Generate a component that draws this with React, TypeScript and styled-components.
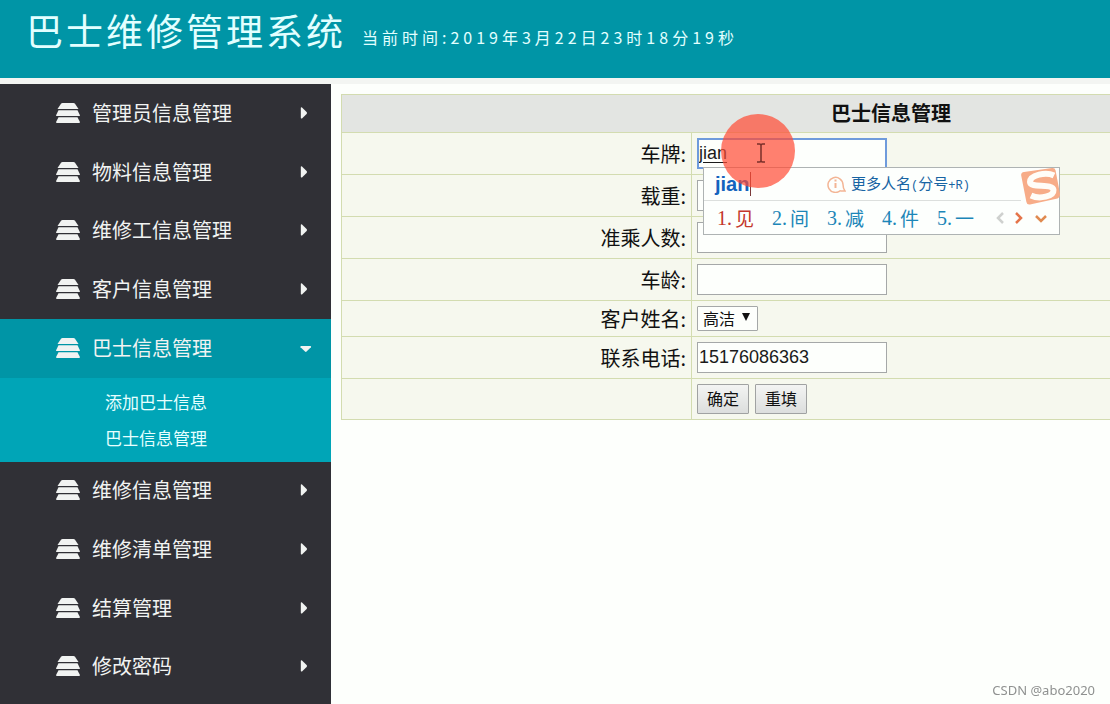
import React from 'react';
import styled, { createGlobalStyle } from 'styled-components';

const sans = `"Noto Sans CJK SC", "Noto Sans", sans-serif`;

const GlobalStyle = createGlobalStyle`
  *, *::before, *::after { box-sizing: border-box; }
  html, body { margin: 0; padding: 0; }
  body {
    background: #fdfffc;
    font-family: ${sans};
    color: #111;
    overflow: hidden;
  }
  button, input, select { font: inherit; margin: 0; }
`;

const Page = styled.div`
  display: flex;
  flex-direction: column;
  min-height: 100vh;
  overflow: hidden;
`;

const Header = styled.header`
  display: flex;
  align-items: center;
  gap: 16px;
  height: 84px;
  padding: 0 26px 18px;
  background: #0095a6;
  border-bottom: 6px solid #f3f5f2;
  color: #e2ffff;
  white-space: nowrap;
`;

const SystemTitle = styled.h1`
  margin: 0;
  font-size: 37px;
  line-height: 40px;
  font-weight: 400;
  letter-spacing: 3px;
`;

const Clock = styled.span`
  padding-top: 14px;
  font-size: 16px;
  line-height: 24px;
  letter-spacing: 4px;
`;

const Body = styled.div`
  display: flex;
  flex: 1;
`;

const Sidebar = styled.nav`
  flex: 0 0 331px;
  background: #303036;
`;

const MenuButton = styled.button<{ $open?: boolean }>`
  display: flex;
  align-items: center;
  gap: 12px;
  width: 100%;
  height: 59px;
  padding: 0 19px 2px 56px;
  border: 0;
  background: ${(p) => (p.$open ? '#0095a6' : 'transparent')};
  color: #f1f3f2;
  font-size: 20px;
  line-height: 28px;
  text-align: left;
  cursor: pointer;

  &:nth-of-type(3n) { height: 58px; }
`;

const MenuText = styled.span`
  flex: 1;
`;

const SubMenu = styled.ul`
  margin: 0;
  padding: 6px 0;
  list-style: none;
  background: #00a5b7;
`;

const SubLink = styled.a`
  display: block;
  padding: 0 105px;
  height: 36px;
  font-size: 17px;
  line-height: 36px;
  color: #e6ffff;
  text-decoration: none;
`;

const Main = styled.main`
  flex: 1;
  min-width: 0;
  padding: 10px 0 0 10px;
  overflow: hidden;
`;

/* The form spans the full page width, so it runs on past the right edge of the pane. */
const FormTable = styled.table`
  width: calc(100% + 331px);
  border-collapse: collapse;
  table-layout: fixed;
  background: #f6f8ee;
  font-size: 20px;
  line-height: 28px;
`;

const TitleCell = styled.th`
  height: 38px;
  padding: 0 0 2px;
  border: 1px solid #d3dcb0;
  background: #e3e5e2;
  font-weight: 700;
  text-align: center;
`;

const LabelCell = styled.th`
  padding: 0 5px 0 0;
  border: 1px solid #d3dcb0;
  font-weight: 400;
  text-align: right;
`;

const FieldCell = styled.td`
  padding: 5px;
  border: 1px solid #d3dcb0;
`;

const FieldBox = styled.div`
  display: flex;
  position: relative;
  gap: 6px;
`;

const TextInput = styled.input<{ $active?: boolean }>`
  width: 190px;
  height: 31px;
  border: ${(p) => (p.$active ? '2px solid #6f9bdc' : '1px solid #a5a8a8')};
  padding: 0 0 0 ${(p) => (p.$active ? 0 : 1)}px;
  border-radius: 0;
  background: #fdfffc;
  color: #1a1a1a;
  font-family: "Liberation Sans", sans-serif;
  font-size: 18px;
  text-decoration: ${(p) => (p.$active ? 'underline' : 'none')};
  text-underline-offset: 3px;
  outline: none;
`;

const SelectBox = styled.div`
  position: relative;
  display: flex;
`;

const Select = styled.select`
  appearance: none;
  width: 61px;
  height: 25px;
  padding: 0 0 0 5px;
  border: 1px solid #a5a8a8;
  border-radius: 1px;
  background: #fdfffc;
  color: #111;
  font-size: 16px;
  line-height: 23px;
`;

const SelectArrow = styled.svg`
  position: absolute;
  right: 8px;
  top: 7px;
  pointer-events: none;
`;

const FormButton = styled.button`
  width: 52px;
  height: 30px;
  padding: 0 0 2px;
  border: 1px solid #a0a2a2;
  border-radius: 1px;
  background: linear-gradient(#f3f4f3, #dcdedd);
  color: #111;
  font-size: 16px;
  line-height: 24px;
`;

const ImePanel = styled.div`
  position: absolute;
  z-index: 2;
  left: 6px;
  top: 29px;
  width: 357px;
  height: 68px;
  border: 1px solid #aeb3b3;
  background: #fdfffd;
`;

const ImeTop = styled.div`
  display: flex;
  align-items: center;
  height: 33px;
  margin-right: 38px;
  padding-left: 11px;
  border-bottom: 1px solid #dcdfdd;
  white-space: nowrap;
`;

const Composition = styled.span`
  position: relative;
  z-index: 4;
  width: 36px;
  margin-right: 75px;
  border-right: 1px solid #7a3a3a;
  font: 700 20px/24px "Liberation Sans", sans-serif;
  color: #1463bd;
`;

const ImeHint = styled.span`
  margin-left: 5px;
  font-size: 15px;
  line-height: 22px;
  color: #1764a3;
`;

const HintRun = styled.span`
  font-family: "Liberation Mono", monospace;
  font-size: 12px;
`;

const Candidates = styled.div`
  display: flex;
  align-items: center;
  height: 33px;
  padding-left: 13px;
`;

const Candidate = styled.span<{ $first?: boolean }>`
  flex: 0 0 55px;
  display: flex;
  align-items: center;
  font-size: 19px;
  line-height: 28px;
  color: ${(p) => (p.$first ? '#c4372b' : '#1c86b8')};
`;

const CandidateNo = styled.span`
  width: 18px;
  font-family: "Liberation Serif", serif;
  font-size: 20px;
  white-space: nowrap;
`;

const Pager = styled.svg`
  flex: none;
  margin-left: 3px;
`;

const SogouLogo = styled.svg`
  position: absolute;
  right: -1px;
  top: -1px;
`;

const ClickSpot = styled.div`
  position: absolute;
  z-index: 3;
  left: 24px;
  top: -24px;
  width: 74px;
  height: 74px;
  border-radius: 50%;
  background: rgba(255, 74, 51, 0.7);
  pointer-events: none;
`;

const Pointer = styled.svg`
  position: absolute;
  z-index: 4;
  left: 59px;
  top: 5px;
  pointer-events: none;
`;

const Watermark = styled.footer`
  position: fixed;
  right: 15px;
  bottom: 6px;
  font-family: "Noto Sans", sans-serif;
  font-size: 13px;
  line-height: 16px;
  color: #8f9190;
`;

const StackIcon = () => (
  <svg width="24" height="20" viewBox="0 0 24 20" fill="currentColor" aria-hidden="true">
    <path d="M6.500 0h11q1 0 1.500.7L22.500 6h-21L5 .7Q5.500 0 6.500 0Z" />
    <path d="M2.500 7.300h19l2.300 4.600q.4 1.100-.7 1.100H.9q-1.100 0-.7-1.100Z" />
    <path d="M2.500 14.300h19l2.300 4.400q.4 1.300-.7 1.300H.9q-1.100 0-.7-1.300Z" />
  </svg>
);

const Caret = ({ open }: { open?: boolean }) => (
  <svg width="12" height="12" viewBox="0 0 12 12" fill="currentColor" aria-hidden="true">
    {open ? (
      <path d="M1 4h9.500q1 .6.4 1.300L6.600 9.600q-.8.6-1.600 0L.5 5.200Q0 4.500 1 4Z" />
    ) : (
      <path d="M.8 1q0-1.200 1.200-.6l4.600 4.700q.7.900 0 1.800L2 11.400Q.8 12 .8 10.800Z" />
    )}
  </svg>
);

const MenuItem = ({ label, open }: { label: string; open?: boolean }) => (
  <MenuButton type="button" $open={open} aria-expanded={!!open}>
    <StackIcon />
    <MenuText>{label}</MenuText>
    <Caret open={open} />
  </MenuButton>
);

const before = ['管理员信息管理', '物料信息管理', '维修工信息管理', '客户信息管理'];
const after = ['维修信息管理', '维修清单管理', '结算管理', '修改密码'];
const candidates = ['见', '间', '减', '件', '一'];

const Ime = () => (
  <ImePanel>
    <ImeTop>
      <Composition>jian</Composition>
      <svg width="20" height="18" viewBox="0 0 20 18" fill="none" stroke="#f3b595" strokeWidth="1.500">
        <path d="M14.500 15.500A7.500 7.500 0 1 1 17 9.500q0 4 2 6.500h-4.500" />
        <path d="M9.500 8v5M9.500 4.500v2" strokeWidth="2" />
      </svg>
      <ImeHint>
        更多人名<HintRun>(</HintRun>分号<HintRun>+R)</HintRun>
      </ImeHint>
    </ImeTop>
    <Candidates>
      {candidates.map((c, i) => (
        <Candidate key={c} $first={i === 0}>
          <CandidateNo>{i + 1}.</CandidateNo>
          {c}
        </Candidate>
      ))}
      <Pager width="54" height="14" viewBox="0 0 54 14" fill="none" strokeWidth="2.500">
        <path d="M8 2 3 7l5 5" stroke="#cfd1cf" />
        <path d="m21 2 5 5-5 5" stroke="#e5744a" />
        <path d="m41 5 5 5 5-5" stroke="#e08a50" />
      </Pager>
    </Candidates>
    <SogouLogo width="39" height="39" viewBox="0 0 39 39">
      <path d="M3 5 31 1q3-.4 3.600 2.400L39 27q.5 3-2.500 4.500L9 37.500q-3 .6-3.600-2.500L.2 8.500Q-.2 5.500 3 5Z" fill="#f7ac88" />
      <path
        d="M33 8.500C25 4.500 9 8 9 15c0 6.500 23 1 23.500 8 .5 6.500-14 9.500-22.500 5.500"
        fill="none"
        stroke="#fffdf8"
        strokeWidth="6"
      />
    </SogouLogo>
  </ImePanel>
);

const Field = ({ id, label, children }: { id: string; label: string; children: React.ReactNode }) => (
  <tr>
    <LabelCell scope="row">
      <label htmlFor={id}>{label}:</label>
    </LabelCell>
    <FieldCell>
      <FieldBox>{children}</FieldBox>
    </FieldCell>
  </tr>
);

export default function App() {
  return (
    <>
      <GlobalStyle />
      <Page>
        <Header>
          <SystemTitle>巴士维修管理系统</SystemTitle>
          <Clock>当前时间:2019年3月22日23时18分19秒</Clock>
        </Header>
        <Body>
          <Sidebar>
            {before.map((m) => (
              <MenuItem key={m} label={m} />
            ))}
            <MenuItem label="巴士信息管理" open />
            <SubMenu>
              <li>
                <SubLink href="#add">添加巴士信息</SubLink>
              </li>
              <li>
                <SubLink href="#manage">巴士信息管理</SubLink>
              </li>
            </SubMenu>
            {after.map((m) => (
              <MenuItem key={m} label={m} />
            ))}
          </Sidebar>
          <Main>
            <form onSubmit={(e) => e.preventDefault()}>
              <FormTable>
                <colgroup>
                  <col style={{ width: '350px' }} />
                  <col />
                </colgroup>
                <thead>
                  <tr>
                    <TitleCell colSpan={2}>巴士信息管理</TitleCell>
                  </tr>
                </thead>
                <tbody>
                  <Field id="plate" label="车牌">
                    <TextInput id="plate" $active defaultValue="jian" />
                    <Ime />
                    <ClickSpot />
                    <Pointer width="10" height="20" viewBox="0 0 10 20" fill="none" stroke="#7a2f2a" strokeWidth="1.500">
                      <path d="M1 1h2.500q1.500 0 1.500 1.500v15q0 1.500-1.500 1.500H1M9 1H6.500Q5 1 5 2.500v15Q5 19 6.500 19H9" />
                    </Pointer>
                  </Field>
                  <Field id="load" label="载重">
                    <TextInput id="load" />
                  </Field>
                  <Field id="seats" label="准乘人数">
                    <TextInput id="seats" />
                  </Field>
                  <Field id="age" label="车龄">
                    <TextInput id="age" />
                  </Field>
                  <Field id="customer" label="客户姓名">
                    <SelectBox>
                      <Select id="customer">
                        <option>高洁</option>
                      </Select>
                      <SelectArrow width="8" height="8" viewBox="0 0 9 9">
                        <path d="M0 0h9L4.500 9Z" fill="#111" />
                      </SelectArrow>
                    </SelectBox>
                  </Field>
                  <Field id="phone" label="联系电话">
                    <TextInput id="phone" defaultValue="15176086363" />
                  </Field>
                  <tr>
                    <LabelCell as="td" />
                    <FieldCell>
                      <FieldBox>
                        <FormButton type="submit">确定</FormButton>
                        <FormButton type="reset">重填</FormButton>
                      </FieldBox>
                    </FieldCell>
                  </tr>
                </tbody>
              </FormTable>
            </form>
          </Main>
        </Body>
        <Watermark>CSDN @abo2020</Watermark>
      </Page>
    </>
  );
}
